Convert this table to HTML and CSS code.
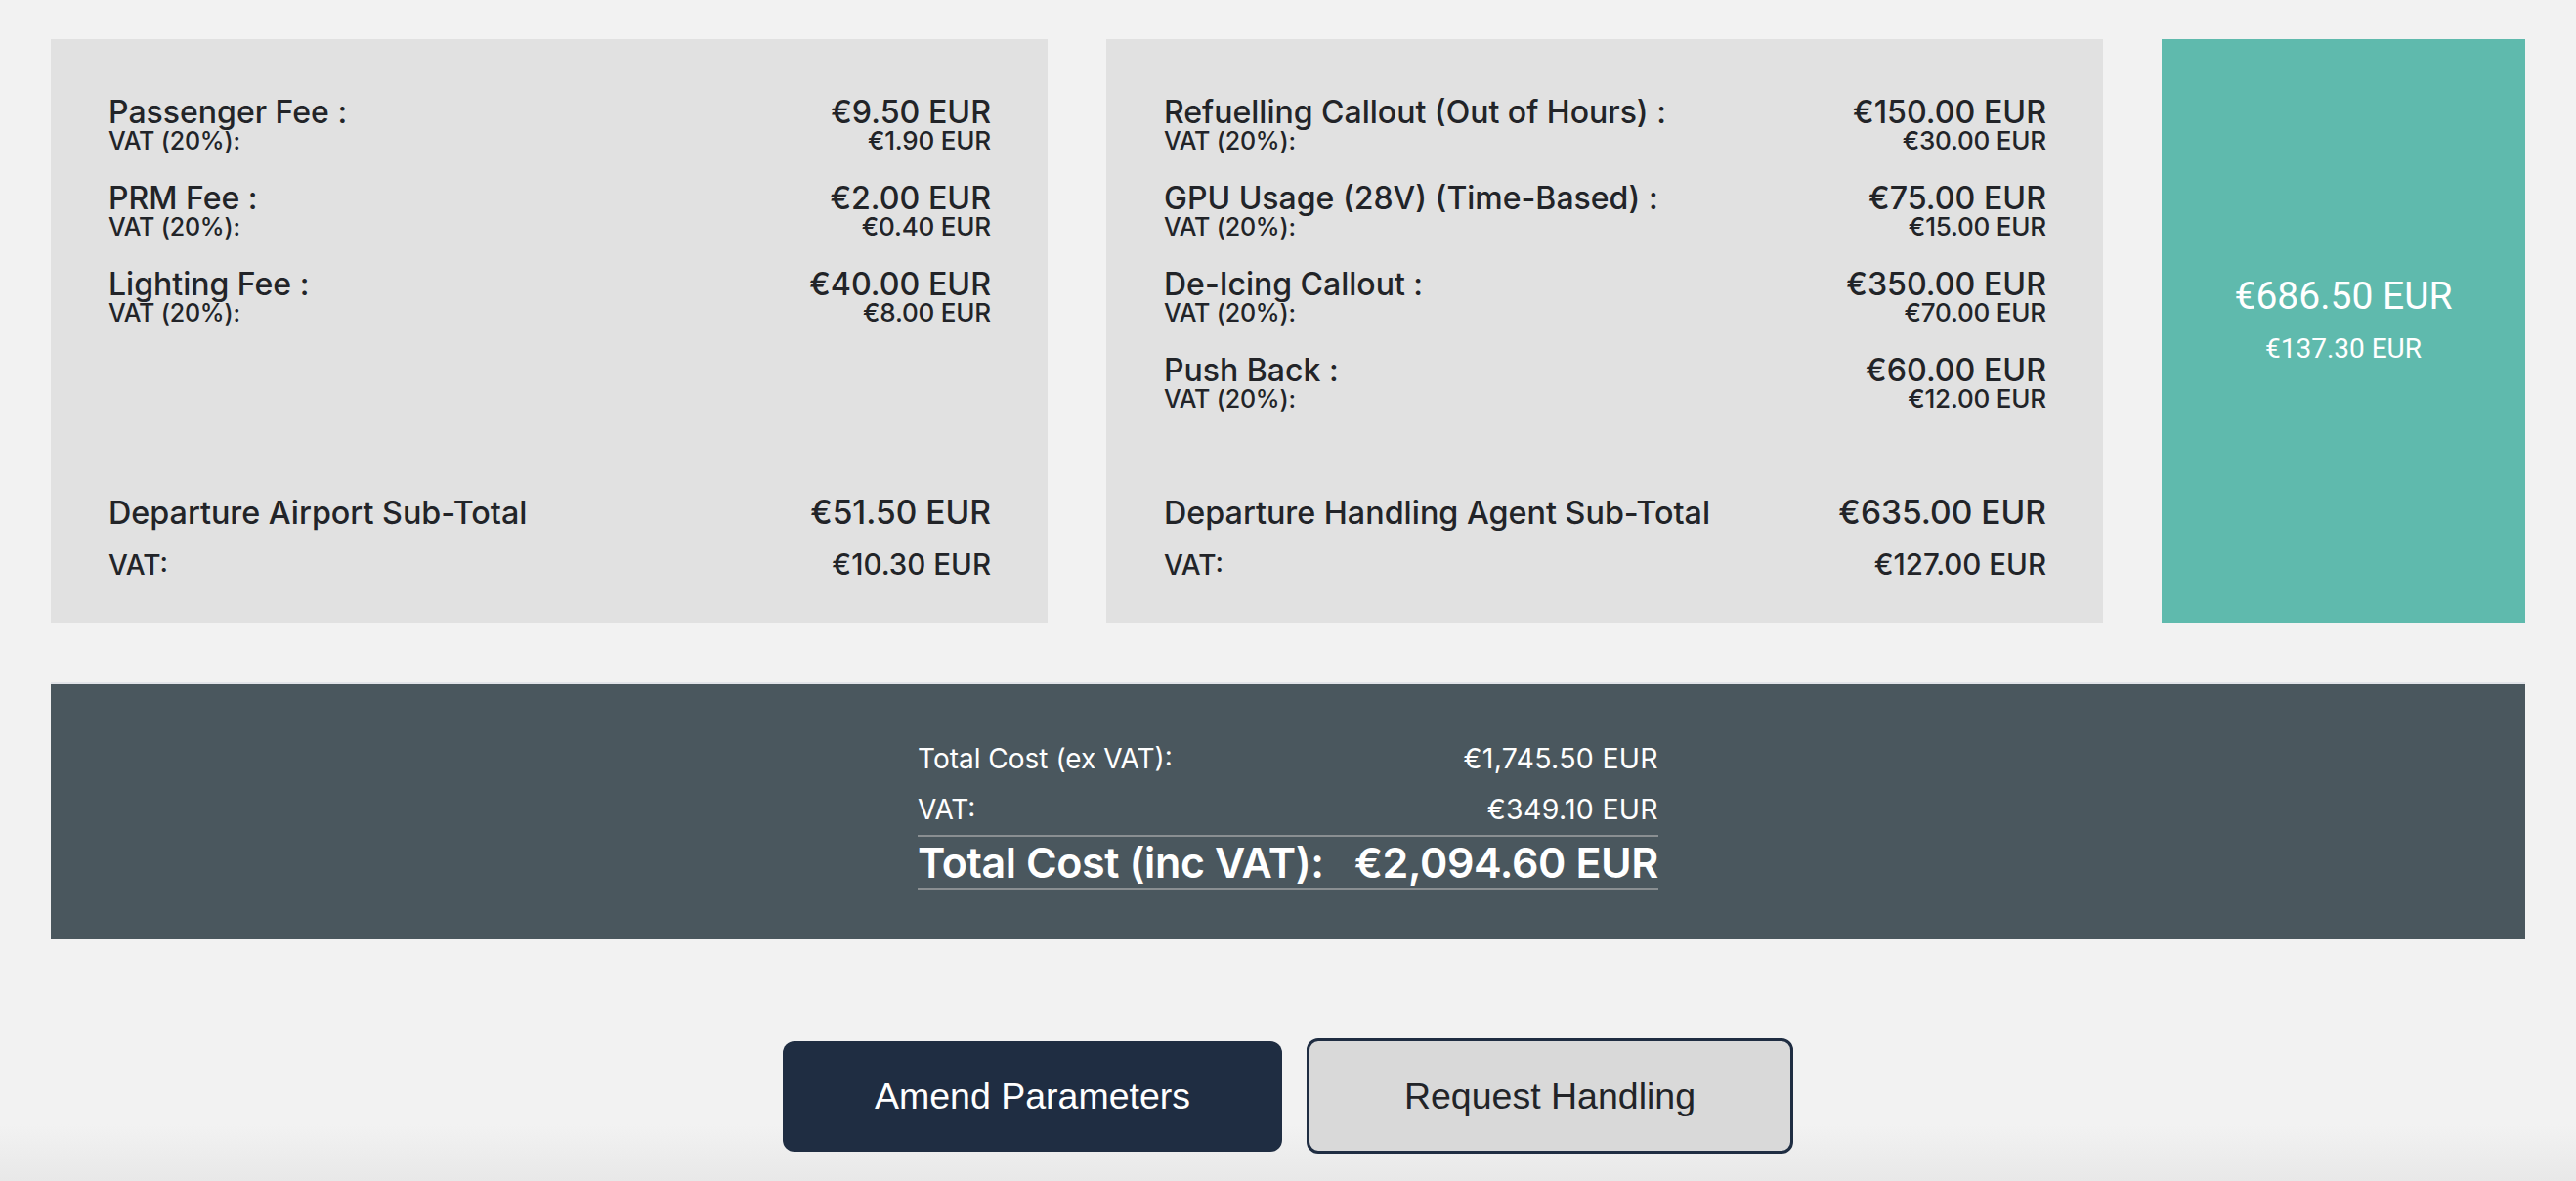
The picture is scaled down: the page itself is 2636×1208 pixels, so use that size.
FILE: index.html
```html
<!DOCTYPE html>
<html lang="en">
<head>
<meta charset="utf-8">
<title>Cost Summary</title>
<link rel="stylesheet" href="styles.css">
</head>
<body>
<main class="page">
  <section class="breakdown">
    <div class="panel">
      <div class="fees">
        <div class="fee">
          <div class="fee-main"><span>Passenger Fee :</span><span class="amt">€9.50 EUR</span></div>
          <div class="fee-vat"><span>VAT (20%):</span><span>€1.90 EUR</span></div>
        </div>
        <div class="fee">
          <div class="fee-main"><span>PRM Fee :</span><span class="amt">€2.00 EUR</span></div>
          <div class="fee-vat"><span>VAT (20%):</span><span>€0.40 EUR</span></div>
        </div>
        <div class="fee">
          <div class="fee-main"><span>Lighting Fee :</span><span class="amt">€40.00 EUR</span></div>
          <div class="fee-vat"><span>VAT (20%):</span><span>€8.00 EUR</span></div>
        </div>
      </div>
      <div class="subtotal">
        <div class="sub-row"><span>Departure Airport Sub-Total</span><span class="amt">€51.50 EUR</span></div>
        <div class="sub-vat"><span>VAT:</span><span>€10.30 EUR</span></div>
      </div>
    </div>

    <div class="panel">
      <div class="fees">
        <div class="fee">
          <div class="fee-main"><span>Refuelling Callout (Out of Hours) :</span><span class="amt">€150.00 EUR</span></div>
          <div class="fee-vat"><span>VAT (20%):</span><span>€30.00 EUR</span></div>
        </div>
        <div class="fee">
          <div class="fee-main"><span>GPU Usage (28V) (Time-Based) :</span><span class="amt">€75.00 EUR</span></div>
          <div class="fee-vat"><span>VAT (20%):</span><span>€15.00 EUR</span></div>
        </div>
        <div class="fee">
          <div class="fee-main"><span>De-Icing Callout :</span><span class="amt">€350.00 EUR</span></div>
          <div class="fee-vat"><span>VAT (20%):</span><span>€70.00 EUR</span></div>
        </div>
        <div class="fee">
          <div class="fee-main"><span>Push Back :</span><span class="amt">€60.00 EUR</span></div>
          <div class="fee-vat"><span>VAT (20%):</span><span>€12.00 EUR</span></div>
        </div>
      </div>
      <div class="subtotal">
        <div class="sub-row"><span>Departure Handling Agent Sub-Total</span><span class="amt">€635.00 EUR</span></div>
        <div class="sub-vat"><span>VAT:</span><span>€127.00 EUR</span></div>
      </div>
    </div>

    <div class="sum-card">
      <div class="sum-main">€686.50 EUR</div>
      <div class="sum-vat">€137.30 EUR</div>
    </div>
  </section>

  <section class="totals">
    <table class="totals-table">
      <tr><td>Total Cost (ex VAT):</td><td class="num">€1,745.50 EUR</td></tr>
      <tr><td>VAT:</td><td class="num">€349.10 EUR</td></tr>
      <tr class="grand"><td>Total Cost (inc VAT):</td><td class="num">€2,094.60 EUR</td></tr>
    </table>
  </section>

  <div class="actions">
    <button class="btn btn-primary" type="button">Amend Parameters</button>
    <button class="btn btn-secondary" type="button">Request Handling</button>
  </div>
</main>
</body>
</html>
```

FILE: styles.css
```css
html, body {
  margin: 0;
  padding: 0;
}

html {
  background: #f2f2f2;
}

body {
  min-height: 1208px;
  background: linear-gradient(to bottom, #f2f2f2 0, #f2f2f2 1150px, #e8e8e8 1208px);
  font-family: "Inter", "Noto Sans", sans-serif;
  color: #222428;
}

.page {
  padding: 40px 52px 0;
}

.breakdown {
  display: grid;
  grid-template-columns: 1020px 1020px 372px;
  column-gap: 60px;
  height: 597px;
}

.panel {
  background: #e1e1e1;
  padding: 59px 58px 37px 59px;
  display: flex;
  flex-direction: column;
  box-sizing: border-box;
}

.fees {
  display: flex;
  flex-direction: column;
  gap: 30px;
}

.fee-main,
.fee-vat,
.sub-row,
.sub-vat {
  display: flex;
  justify-content: space-between;
  align-items: baseline;
}

.fee-main {
  font-size: 32px;
  line-height: 32px;
  font-weight: 500;
}

.fee-main .amt {
  font-size: 32.2px;
  font-weight: 500;
}

.fee-vat {
  font-size: 25px;
  line-height: 25px;
  font-weight: 500;
  letter-spacing: -0.2px;
}

.fee-vat span:last-child {
  font-size: 26px;
}

.subtotal {
  margin-top: auto;
  display: flex;
  flex-direction: column;
  gap: 8px;
}

.sub-row {
  font-size: 32.3px;
  line-height: 44px;
  font-weight: 500;
}

.sub-row .amt {
  font-size: 33.5px;
  font-weight: 500;
}

.sub-vat {
  font-size: 28px;
  line-height: 44px;
  font-weight: 500;
}

.sub-vat span:last-child {
  font-size: 29.5px;
}

.sum-card {
  background: #5fbaad;
  color: #ffffff;
  display: flex;
  flex-direction: column;
  align-items: center;
  justify-content: center;
  font-family: "Roboto", "Liberation Sans", sans-serif;
  padding-bottom: 22px;
}

.sum-main {
  font-size: 39px;
  line-height: 46px;
}

.sum-vat {
  font-size: 28px;
  line-height: 36px;
  margin-top: 13px;
}

.totals {
  margin-top: 61px;
  background: #4a575e;
  border-top: 2px solid #e2e4e9;
  padding: 50px 0;
  display: flex;
  justify-content: center;
  color: #ffffff;
}

.totals-table {
  width: 758px;
  border-collapse: collapse;
}

.totals-table td {
  padding: 0;
  font-size: 28px;
  line-height: 52px;
  font-weight: 400;
  letter-spacing: 0;
  white-space: nowrap;
}

.totals-table .num {
  text-align: right;
  font-size: 28.5px;
  letter-spacing: 0.3px;
}

.totals-table .grand td {
  border-top: 2px solid #8a8f92;
  border-bottom: 2px solid #8a8f92;
  font-size: 43px;
  font-weight: 600;
  letter-spacing: -0.4px;
}

.actions {
  margin-top: 102px;
  display: flex;
  justify-content: center;
  align-items: center;
  gap: 25px;
}

.btn {
  font-family: "Liberation Sans", Arial, sans-serif;
  font-size: 37.5px;
  line-height: 43px;
  border-radius: 12px;
  cursor: pointer;
  margin: 0;
  box-sizing: border-box;
  text-align: center;
  padding: 0;
}

.btn-primary {
  background: #1f2d42;
  color: #ffffff;
  border: 0;
  width: 511px;
  height: 113px;
}

.btn-secondary {
  background: #d9d9d9;
  color: #222428;
  border: 3px solid #1f2d42;
  width: 498px;
  height: 118px;
}
```
